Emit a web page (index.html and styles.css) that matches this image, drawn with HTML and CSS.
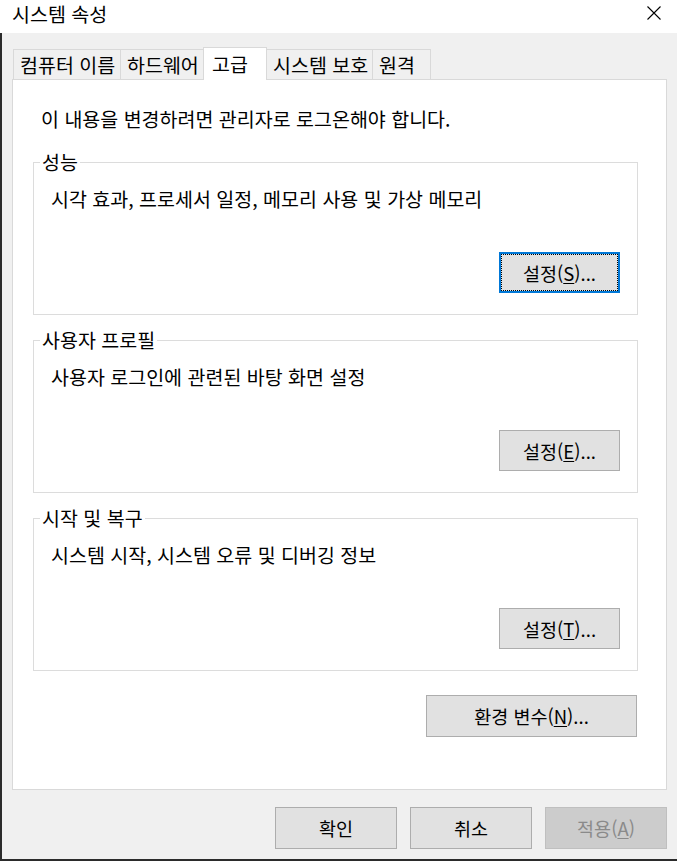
FILE: index.html
```html
<!DOCTYPE html>
<html lang="ko">
<head>
    <meta charset="UTF-8">
    <title>시스템 속성</title>
    <link rel="stylesheet" href="styles.css">
</head>
<body>
    <div class="titlebar">
        <span class="title">시스템 속성</span>
        <svg class="close" width="14" height="14" viewBox="0 0 14 14">
            <path d="M0.5 0.5 L13.5 13.5 M13.5 0.5 L0.5 13.5" stroke="#000" stroke-width="1.1" fill="none"/>
        </svg>
    </div>

    <div class="window">
        <div class="tabs">
            <div class="tab" style="width: 108px;">컴퓨터 이름</div>
            <div class="tab" style="width: 84px;">하드웨어</div>
            <div class="tab selected" style="width: 64px;">고급</div>
            <div class="tab" style="width: 107px;">시스템 보호</div>
            <div class="tab" style="width: 59px;">원격</div>
        </div>

        <div class="panel">
            <p class="notice">이 내용을 변경하려면 관리자로 로그온해야 합니다.</p>

            <fieldset class="group">
                <legend>성능</legend>
                <p class="desc">시각 효과, 프로세서 일정, 메모리 사용 및 가상 메모리</p>
                <div class="group-buttons">
                    <button class="btn focused">설정(<u>S</u>)...</button>
                </div>
            </fieldset>

            <fieldset class="group">
                <legend>사용자 프로필</legend>
                <p class="desc">사용자 로그인에 관련된 바탕 화면 설정</p>
                <div class="group-buttons">
                    <button class="btn">설정(<u>E</u>)...</button>
                </div>
            </fieldset>

            <fieldset class="group">
                <legend>시작 및 복구</legend>
                <p class="desc">시스템 시작, 시스템 오류 및 디버깅 정보</p>
                <div class="group-buttons">
                    <button class="btn">설정(<u>T</u>)...</button>
                </div>
            </fieldset>

            <div class="env-row">
                <button class="btn env">환경 변수(<u>N</u>)...</button>
            </div>
        </div>

        <div class="footer">
            <button class="btn wide">확인</button>
            <button class="btn wide">취소</button>
            <button class="btn wide" disabled>적용(<u>A</u>)</button>
        </div>
    </div>
</body>
</html>
```

FILE: styles.css
```css
body {
    margin: 0;
    width: 677px;
    height: 861px;
    font-family: "Noto Sans CJK KR", "Noto Sans", sans-serif;
    font-size: 19.5px;
    color: #000;
    background-color: #f0f0f0;
    overflow: hidden;
}

.titlebar {
    height: 33px;
    background-color: #fff;
    display: flex;
    justify-content: space-between;
    align-items: flex-start;
    padding: 0 16px 0 12px;
    box-sizing: border-box;
}

.title {
    line-height: 28.5px;
}

.close {
    margin-top: 6px;
}

.window {
    height: 828px;
    box-sizing: border-box;
    border-left: 2px solid #2b2b2b;
    border-bottom: 2px solid #2b2b2b;
    padding: 14px 10px 0 10px;
    background-color: #f0f0f0;
}

/* tab strip */
.tabs {
    display: flex;
    align-items: flex-end;
    margin-left: 1px;
}

.tab {
    height: 30px;
    box-sizing: border-box;
    border: 1px solid #d9d9d9;
    border-bottom: none;
    margin-left: -1px;
    padding-left: 6px;
    line-height: 24px;
    display: flex;
    align-items: center;
    white-space: nowrap;
    background-color: #f0f0f0;
}

    .tab:first-child {
        margin-left: 0;
    }

    .tab.selected {
        height: 33px;
        margin-bottom: -1px;
        padding-left: 8px;
        background-color: #fff;
        position: relative;
        z-index: 2;
    }

.panel {
    height: 711px;
    box-sizing: border-box;
    border: 1px solid #d9d9d9;
    background-color: #fff;
    padding: 0 27px 0 20px;
    position: relative;
    z-index: 1;
}

.notice {
    margin: 27px 0 0 8px;
    line-height: 24px;
}

/* group boxes */
.group {
    width: 605px;
    box-sizing: border-box;
    margin: 13px 0 0 0;
    padding: 0 17px 0 6px;
    border: 1px solid #dcdcdc;
    min-inline-size: 0;
}

    .group:first-of-type {
        margin-top: 19px;
    }

    .group legend {
        padding: 0 2px;
        line-height: 24px;
    }

.desc {
    margin: 13px 0 0 11px;
    line-height: 24px;
}

.group-buttons {
    display: flex;
    justify-content: flex-end;
    margin: 41px 0 21px 0;
}

.btn {
    font-family: inherit;
    font-size: 18.5px;
    line-height: 24px;
    color: #000;
    background-color: #e1e1e1;
    border: 1px solid #adadad;
    border-radius: 0;
    box-sizing: border-box;
    width: 121px;
    height: 41px;
    padding: 0;
    margin: 0;
}

    .btn u {
        text-underline-offset: 2px;
    }

    .btn.focused {
        border: 2px solid #0078d7;
        outline: 1px dotted #000;
        outline-offset: -3px;
    }

    .btn:disabled {
        background-color: #cccccc;
        border-color: #bfbfbf;
        color: #8a8a8a;
    }

.env-row {
    width: 605px;
    display: flex;
    justify-content: flex-end;
    margin-top: 24px;
}

.btn.env {
    width: 211px;
    height: 42px;
    margin-right: 1px;
}

.footer {
    display: flex;
    justify-content: flex-end;
    gap: 13px;
    margin-top: 17px;
}

.btn.wide {
    width: 122px;
    height: 42px;
}
```
